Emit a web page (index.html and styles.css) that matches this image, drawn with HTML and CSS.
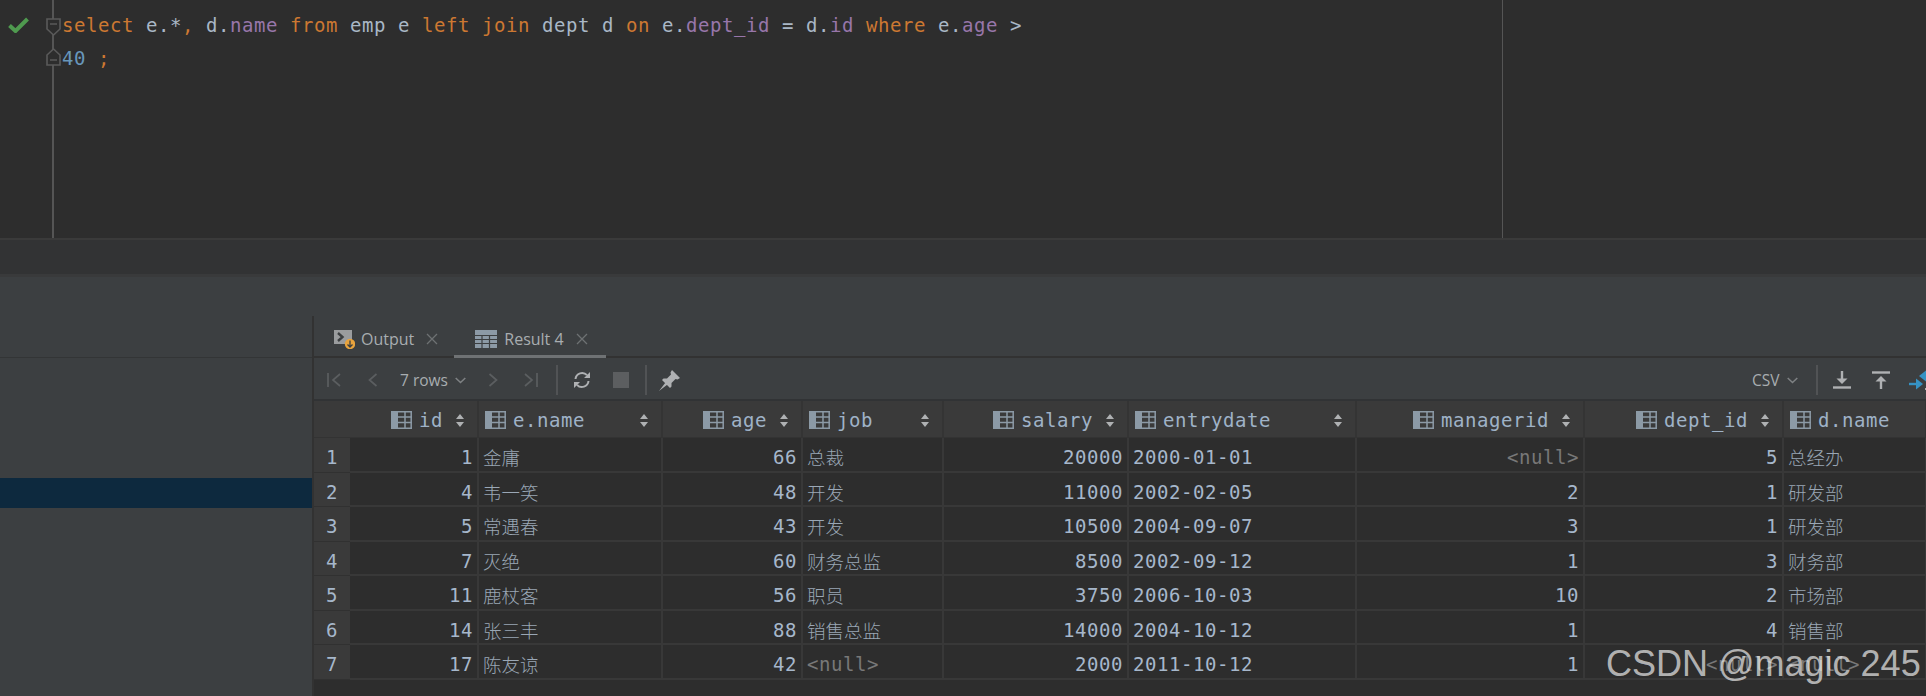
FILE: index.html
```html
<!DOCTYPE html>
<html lang="zh">
<head>
<meta charset="utf-8">
<title>Query result</title>
<link rel="stylesheet" href="styles.css">
</head>
<body>
<svg class="defs" width="0" height="0" aria-hidden="true">
  <symbol id="col" viewBox="0 0 21 18">
    <rect x="0" y="0" width="7" height="18" fill="#8c9aa6"/>
    <path d="M7 .8H21M7 6H21M7 11.500H21M7 17.200H21M14 .8V17.200M20.200 .8V17.200" stroke="#8c9aa6" stroke-width="1.5" fill="none"/>
  </symbol>
  <symbol id="sort" viewBox="0 0 8 13">
    <path d="M4 0L8 5H0zM4 13L0 8H8z" fill="#afb1b3"/>
  </symbol>
</svg>

<section class="editor">
  <div class="gutter">
    <svg class="check" viewBox="0 0 21 16"><path d="M1.500 8.500L7.500 14L19.500 2" fill="none" stroke="#4f9a4f" stroke-width="4"/></svg>
    <svg class="fold fold-top" viewBox="0 0 15 18"><path d="M1 1H14V11L7.500 17L1 11zM4 6H11" fill="#2d2d2d" stroke="#5a5a5a" stroke-width="1.600"/></svg>
    <svg class="fold fold-bottom" viewBox="0 0 15 18"><path d="M1 17H14V7L7.500 1L1 7zM4 12H11" fill="#2d2d2d" stroke="#5a5a5a" stroke-width="1.600"/></svg>
  </div>
  <div class="code">
    <div class="line"><span class="kw">select</span> e.*<span class="kw">,</span> d.<span class="col">name</span> <span class="kw">from</span> emp e <span class="kw">left</span> <span class="kw">join</span> dept d <span class="kw">on</span> e.<span class="col">dept_id</span> = d.<span class="col">id</span> <span class="kw">where</span> e.<span class="col">age</span> &gt;</div>
    <div class="line"><span class="num">40</span> <span class="kw">;</span></div>
  </div>
</section>
<div class="band"></div>

<section class="panel">
  <aside class="sidebar">
    <div class="side-head"></div>
    <div class="side-selected"></div>
  </aside>
  <main class="results">
    <div class="tabs">
      <div class="tab">
        <svg class="tab-icon-output" viewBox="0 0 21 20">
          <rect x="0" y="1" width="18" height="14" fill="#9a9c9e"/>
          <path d="M4 4L8.500 8L4 12" fill="none" stroke="#3c3f41" stroke-width="2.400"/>
          <circle cx="16" cy="15" r="5.200" fill="#e8a33d"/>
          <path d="M16 11.500V18M13.500 15.500L16 18L18.500 15.500" fill="none" stroke="#3c3f41" stroke-width="1.300"/>
        </svg>
        <span class="tab-label">Output</span>
        <svg class="tab-close" viewBox="0 0 12 12"><path d="M1 1L11 11M11 1L1 11" stroke="#6e7173" stroke-width="1.300"/></svg>
      </div>
      <div class="tab tab-active">
        <svg class="tab-icon-grid" viewBox="0 0 22 18">
          <rect width="22" height="18" fill="#8c9aa6"/>
          <path d="M0 5.500H22M0 9.500H22M0 13.500H22M7 5.500V18M14.500 5.500V18" stroke="#3c3f41" stroke-width="1.200"/>
        </svg>
        <span class="tab-label">Result 4</span>
        <svg class="tab-close" viewBox="0 0 12 12"><path d="M1 1L11 11M11 1L1 11" stroke="#6e7173" stroke-width="1.300"/></svg>
      </div>
    </div>

    <div class="toolbar">
      <svg class="tb-first" viewBox="0 0 14 14"><path d="M1 0V14M13 1L6 7L13 13" fill="none" stroke="#5b5e60" stroke-width="1.700"/></svg>
      <svg class="tb-prev" viewBox="0 0 10 14"><path d="M8.500 1L1.500 7L8.500 13" fill="none" stroke="#5b5e60" stroke-width="1.700"/></svg>
      <span class="tb-rows">7 rows</span>
      <svg class="tb-chevron" viewBox="0 0 11 7"><path d="M.7 1L5.500 5.500L10.300 1" fill="none" stroke="#7f8284" stroke-width="1.500"/></svg>
      <svg class="tb-next" viewBox="0 0 10 14"><path d="M1.500 1L8.500 7L1.500 13" fill="none" stroke="#5b5e60" stroke-width="1.700"/></svg>
      <svg class="tb-last" viewBox="0 0 14 14"><path d="M13 0V14M1 1L8 7L1 13" fill="none" stroke="#5b5e60" stroke-width="1.700"/></svg>
      <span class="tb-sep tb-sep-a"></span>
      <svg class="tb-refresh" viewBox="0 0 18 18"><path d="M2.500 8A6.600 6.600 0 0 1 14 4.200M15.500 10A6.600 6.600 0 0 1 4 13.800" fill="none" stroke="#afb1b3" stroke-width="2"/><path d="M11 7H17V1zM7 11H1V17z" fill="#afb1b3"/></svg>
      <span class="tb-stop"></span>
      <span class="tb-sep tb-sep-b"></span>
      <svg class="tb-pin" viewBox="0 0 21 21"><path d="M13 0L21 8L18.500 9.500L16.500 9L12.500 13L12.500 16.500L11 18L3 10L4.500 8.500L8 8.500L12 4.500L11.500 2.500zM6.500 12.500L8.500 14.500L0 21z" fill="#afb1b3"/></svg>
      <span class="tb-csv">CSV</span>
      <svg class="tb-chevron" viewBox="0 0 11 7"><path d="M.7 1L5.500 5.500L10.300 1" fill="none" stroke="#7f8284" stroke-width="1.500"/></svg>
      <span class="tb-sep tb-sep-c"></span>
      <svg class="tb-download" viewBox="0 0 18 18"><path d="M9 0V10" stroke="#afb1b3" stroke-width="2.400"/><path d="M3.500 7.500H14.500L9 13z" fill="#afb1b3"/><path d="M0 16.500H18" stroke="#afb1b3" stroke-width="2.400"/></svg>
      <svg class="tb-upload" viewBox="0 0 18 18"><path d="M0 1.500H18" stroke="#afb1b3" stroke-width="2.400"/><path d="M9 8V18" stroke="#afb1b3" stroke-width="2.400"/><path d="M3.500 10.500H14.500L9 5z" fill="#afb1b3"/></svg>
      <svg class="tb-compare" viewBox="0 0 24 22"><path d="M0 15H9" stroke="#3592c4" stroke-width="2.400"/><path d="M7 9.500L14 15L7 20.500z" fill="#3592c4"/><path d="M24 7H15" stroke="#3592c4" stroke-width="2.400"/><path d="M17 1.500L10 7L17 12.500z" fill="#3592c4"/><path d="M16 20H24" stroke="#afb1b3" stroke-width="2"/></svg>
    </div>

    <div class="grid">
      <div class="hd hd-rownum"></div>
      <div class="hd hd-right"><svg class="col-icon"><use href="#col"/></svg><span class="hd-name">id</span><svg class="sort"><use href="#sort"/></svg></div>
      <div class="hd"><svg class="col-icon"><use href="#col"/></svg><span class="hd-name">e.name</span><svg class="sort"><use href="#sort"/></svg></div>
      <div class="hd hd-right"><svg class="col-icon"><use href="#col"/></svg><span class="hd-name">age</span><svg class="sort"><use href="#sort"/></svg></div>
      <div class="hd"><svg class="col-icon"><use href="#col"/></svg><span class="hd-name">job</span><svg class="sort"><use href="#sort"/></svg></div>
      <div class="hd hd-right"><svg class="col-icon"><use href="#col"/></svg><span class="hd-name">salary</span><svg class="sort"><use href="#sort"/></svg></div>
      <div class="hd"><svg class="col-icon"><use href="#col"/></svg><span class="hd-name">entrydate</span><svg class="sort"><use href="#sort"/></svg></div>
      <div class="hd hd-right"><svg class="col-icon"><use href="#col"/></svg><span class="hd-name">managerid</span><svg class="sort"><use href="#sort"/></svg></div>
      <div class="hd hd-right"><svg class="col-icon"><use href="#col"/></svg><span class="hd-name">dept_id</span><svg class="sort"><use href="#sort"/></svg></div>
      <div class="hd"><svg class="col-icon"><use href="#col"/></svg><span class="hd-name">d.name</span></div>

      <div class="rn">1</div><div class="td r">1</div><div class="td zh">金庸</div><div class="td r">66</div><div class="td zh">总裁</div><div class="td r">20000</div><div class="td">2000-01-01</div><div class="td r null">&lt;null&gt;</div><div class="td r">5</div><div class="td zh">总经办</div>
      <div class="rn">2</div><div class="td r">4</div><div class="td zh">韦一笑</div><div class="td r">48</div><div class="td zh">开发</div><div class="td r">11000</div><div class="td">2002-02-05</div><div class="td r">2</div><div class="td r">1</div><div class="td zh">研发部</div>
      <div class="rn">3</div><div class="td r">5</div><div class="td zh">常遇春</div><div class="td r">43</div><div class="td zh">开发</div><div class="td r">10500</div><div class="td">2004-09-07</div><div class="td r">3</div><div class="td r">1</div><div class="td zh">研发部</div>
      <div class="rn">4</div><div class="td r">7</div><div class="td zh">灭绝</div><div class="td r">60</div><div class="td zh">财务总监</div><div class="td r">8500</div><div class="td">2002-09-12</div><div class="td r">1</div><div class="td r">3</div><div class="td zh">财务部</div>
      <div class="rn">5</div><div class="td r">11</div><div class="td zh">鹿杖客</div><div class="td r">56</div><div class="td zh">职员</div><div class="td r">3750</div><div class="td">2006-10-03</div><div class="td r">10</div><div class="td r">2</div><div class="td zh">市场部</div>
      <div class="rn">6</div><div class="td r">14</div><div class="td zh">张三丰</div><div class="td r">88</div><div class="td zh">销售总监</div><div class="td r">14000</div><div class="td">2004-10-12</div><div class="td r">1</div><div class="td r">4</div><div class="td zh">销售部</div>
      <div class="rn">7</div><div class="td r">17</div><div class="td zh">陈友谅</div><div class="td r">42</div><div class="td null">&lt;null&gt;</div><div class="td r">2000</div><div class="td">2011-10-12</div><div class="td r">1</div><div class="td r null">&lt;null&gt;</div><div class="td null">&lt;null&gt;</div>
    </div>
  </main>
</section>
<div class="watermark">CSDN @magic 245</div>
</body>
</html>
```
FILE: styles.css
```css
* { box-sizing: border-box; }
html, body { margin: 0; height: 696px; overflow: hidden; background: #2d2d2d; }
body { position: relative; font-family: "DejaVu Sans Mono", "Noto Sans CJK SC", monospace; color: #a9b7c6; }
svg { display: block; flex: none; }
.defs { position: absolute; }

/* editor */
.editor { display: flex; height: 238px; background: #2d2d2d; }
.gutter { position: relative; width: 54px; border-right: 2px solid #555; }
.check { position: absolute; left: 8px; top: 17px; width: 21px; height: 16px; }
.fold { position: absolute; left: 46px; width: 15px; height: 18px; }
.fold-top { top: 18px; }
.fold-bottom { top: 48px; }
.code { width: 1449px; padding: 9px 0 0 8px; border-right: 1px solid #555; font-size: 19px; letter-spacing: .56px; }
.line { height: 33px; line-height: 33px; white-space: pre; }
.kw { color: #cc7832; }
.col { color: #9876aa; }
.num { color: #6897bb; }

.band { height: 39px; background: #323334; border-top: 2px solid #3a3a3a; border-bottom: 3px solid #393a3b; }

/* panel */
.panel { display: flex; height: 419px; background: #3c3f41; }
.sidebar { width: 312px; flex: none; }
.side-head { height: 81px; border-bottom: 1px solid #333536; }
.side-selected { height: 30px; margin-top: 120px; background: #0d293e; }
.results { flex: 1; min-width: 0; margin-top: 39px; border-left: 2px solid #323232; display: flex; flex-direction: column; }

.tabs { display: flex; height: 42px; padding-left: 20px; border-bottom: 2px solid #323232; font-family: "Open Sans", "Noto Sans", sans-serif; font-size: 16px; color: #a8adb0; }
.tab { display: flex; align-items: center; height: 41px; padding-top: 4px; }
.tab-active { margin-left: 16px; padding: 6px 18px 0 21px; border-bottom: 3px solid #6f7274; height: 42px; }
.tab-icon-output { width: 21px; height: 20px; margin-right: 6px; }
.tab-icon-grid { width: 22px; height: 18px; margin-right: 7px; }
.tab-close { width: 12px; height: 12px; margin-left: 12px; }

.toolbar { display: flex; align-items: center; height: 43px; overflow: hidden; padding: 3px 0 0 13px; border-bottom: 2px solid #313335; font-family: "Open Sans", "Noto Sans", sans-serif; font-size: 15.5px; color: #a8adb0; }
.tb-first { width: 14px; height: 14px; }
.tb-prev { width: 10px; height: 14px; margin-left: 27px; }
.tb-rows { width: 48px; margin-left: 22px; white-space: nowrap; }
.tb-chevron { width: 11px; height: 7px; margin-left: 7px; }
.tb-next { width: 10px; height: 14px; margin-left: 22px; }
.tb-last { width: 14px; height: 14px; margin-left: 26px; }
.tb-sep { width: 2px; height: 30px; background: #515355; flex: none; }
.tb-sep-a { margin-left: 18px; }
.tb-refresh { width: 18px; height: 18px; margin-left: 15px; }
.tb-stop { width: 16px; height: 16px; margin-left: 22px; background: #5c5e60; flex: none; }
.tb-sep-b { margin-left: 16px; }
.tb-pin { width: 21px; height: 21px; margin-left: 12px; }
.tb-csv { margin-left: auto; width: 28px; white-space: nowrap; }
.tb-sep-c { margin-left: 18px; }
.tb-download { width: 18px; height: 18px; margin-left: 15px; }
.tb-upload { width: 18px; height: 18px; margin-left: 21px; }
.tb-compare { width: 24px; height: 22px; margin-left: 19px; margin-right: -7px; }

/* table */
.grid { flex: 1; display: grid; align-content: start; background: #2d2d2d; grid-template-columns: 36px 129px 184px 140px 141px 185px 228px 228px 199px 143px; grid-template-rows: 37px repeat(7, 34.5px); font-size: 19px; letter-spacing: .56px; }
.hd { display: flex; align-items: center; padding: 2px 0 0 6px; background: #3a3a3a; border-right: 2px solid #343434; border-bottom: 1px solid #333; color: #9fb2c7; }
.hd-right { justify-content: flex-end; padding: 2px 11px 0 0; }
.hd-rownum { padding: 0; border-right: 0; }
.col-icon { width: 21px; height: 18px; margin-right: 7px; }
.sort { width: 8px; height: 13px; margin-left: auto; margin-right: 13px; }
.hd-right .sort { margin-left: 13px; margin-right: 2px; }
.rn { display: flex; align-items: center; justify-content: center; padding-top: 5px; background: #3a3a3a; border-bottom: 1px solid #313131; color: #a6b7cb; }
.td { display: flex; align-items: center; padding: 6px 4px 0 4px; white-space: nowrap; overflow: hidden; border-right: 2px solid #383838; border-bottom: 2px solid #383838; color: #a6b7cb; }
.r { justify-content: flex-end; }
.zh { font-size: 18.5px; letter-spacing: 0; font-family: "Noto Sans CJK SC", sans-serif; font-weight: 300; color: #9aa7b5; }
.null { color: #787878; }

.watermark { position: absolute; left: 1606px; top: 641px; font-family: "Liberation Sans", Arial, sans-serif; font-size: 36px; line-height: 46px; white-space: nowrap; color: rgba(255, 255, 255, .65); }
```
